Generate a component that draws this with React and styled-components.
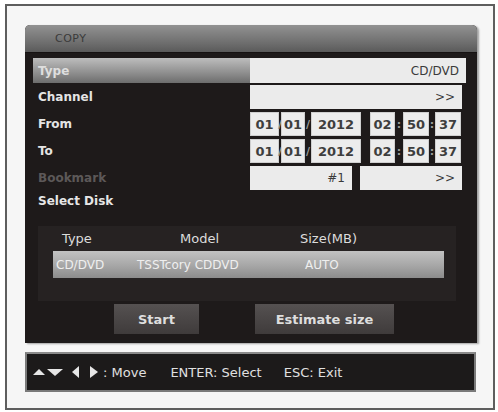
import React from 'react'
import styled, { createGlobalStyle } from 'styled-components'

const GlobalStyle = createGlobalStyle`
    html, body {
        margin:0;
        padding:0;
        background:#ffffff;
    }
    body{
        font-family:"DejaVu Sans", "Noto Sans", sans-serif;
    }
`

const dateFields = [
    { value: '01', width: 29, sep: '/', gap: 2 },
    { value: '01', width: 24, sep: '/', gap: 6 },
    { value: '2012', width: 50, sep: '', gap: 9 },
    { value: '02', width: 25, sep: ':', gap: 8 },
    { value: '50', width: 26, sep: ':', gap: 6 },
    { value: '37', width: 26, sep: '', gap: 0 },
]

const DateRow = () => (
    <DateWrap>
        {dateFields.map((f, i) => (
            <React.Fragment key={i}>
                <DateBox $w={f.width}>{f.value}</DateBox>
                {f.gap > 0 && <Sep $w={f.gap}>{f.sep}</Sep>}
            </React.Fragment>
        ))}
    </DateWrap>
)

const Arrows = () => (
    <svg width="66" height="14" viewBox="0 0 66 14">
        <polygon points="0,10 6,4 12,10" fill="#e6e6e6" />
        <polygon points="14,4 30,4 22,11" fill="#e6e6e6" />
        <polygon points="46,1 46,13 39,7" fill="#e6e6e6" />
        <polygon points="57,1 57,13 65,7" fill="#e6e6e6" />
    </svg>
)

const App = () => {
    return (
        <>
            <GlobalStyle />
            <Frame>
                <Panel>
                    <Header>COPY</Header>
                    <Body>
                        <Row>
                            <Label $active>Type</Label>
                            <Value $wide>CD/DVD</Value>
                        </Row>
                        <Row>
                            <Label>Channel</Label>
                            <Value>&gt;&gt;</Value>
                        </Row>
                        <Row>
                            <Label>From</Label>
                            <DateRow />
                        </Row>
                        <Row>
                            <Label>To</Label>
                            <DateRow />
                        </Row>
                        <Row>
                            <Label $dim>Bookmark</Label>
                            <SplitValue>
                                <Value>#1</Value>
                                <Value>&gt;&gt;</Value>
                            </SplitValue>
                        </Row>
                        <SectionTitle>Select Disk</SectionTitle>
                        <DiskBox>
                            <DiskHead>
                                <span>Type</span>
                                <span>Model</span>
                                <span>Size(MB)</span>
                            </DiskHead>
                            <DiskRow>
                                <span>CD/DVD</span>
                                <span>TSSTcory CDDVD</span>
                                <span>AUTO</span>
                            </DiskRow>
                        </DiskBox>
                        <Buttons>
                            <Button $w={85}>Start</Button>
                            <Button $w={139}>Estimate size</Button>
                        </Buttons>
                    </Body>
                </Panel>
                <Footer>
                    <Arrows />
                    <Hint $ml={4}>: Move</Hint>
                    <Hint $ml={24}>ENTER: Select</Hint>
                    <Hint $ml={22}>ESC: Exit</Hint>
                </Footer>
            </Frame>
        </>
    )
}

const Frame = styled.div`
    box-sizing:border-box;
    margin:4px 0 0 5px;
    width:490px;
    height:406px;
    border:2px solid #5e5e5e;
    background:#f6f6f6;
    padding:19px 0 0 18px;
`

const Panel = styled.div`
    width:452px;
    height:318px;
    background:#1e1a1a;
    border-radius:5px 5px 0 0;
    box-shadow:2px 1px 2px rgba(0,0,0,0.35);
    display:flex;
    flex-direction:column;
    overflow:hidden;
`

const Header = styled.div`
    height:28px;
    flex-shrink:0;
    background:linear-gradient(#929292, #6c6c6c 70%, #5a5a5a);
    color:#3a3a3a;
    font-size:11px;
    letter-spacing:0.5px;
    line-height:28px;
    padding-left:30px;
    border-bottom:1px solid #161212;
    box-sizing:border-box;
`

const Body = styled.div`
    display:flex;
    flex-direction:column;
    padding:5px 0 0 8px;
`

const Row = styled.div`
    display:grid;
    grid-template-columns:217px 1fr;
    height:24px;
    margin-bottom:3px;
    padding-right:15px;
`

const Label = styled.div`
    display:flex;
    align-items:center;
    padding-left:5px;
    font-size:12px;
    font-weight:bold;
    color:${p => p.$dim ? '#5c5858' : p.$active ? '#dedede' : '#e4e4e4'};
    background:${p => p.$active ? 'linear-gradient(#bdbdbd, #8e8e8e 60%, #6d6d6d)' : 'transparent'};
    height:${p => p.$active ? '25px' : '24px'};
`

const Value = styled.div`
    display:flex;
    align-items:center;
    justify-content:flex-end;
    padding-right:7px;
    background:#ebebeb;
    color:#3a3a3a;
    font-size:12px;
    height:${p => p.$wide ? '25px' : '24px'};
    margin-right:${p => p.$wide ? '-4px' : '0'};
`

const SplitValue = styled.div`
    display:grid;
    grid-template-columns:102px 102px;
    gap:8px;
`

const DateWrap = styled.div`
    display:flex;
`

const DateBox = styled.div`
    width:${p => p.$w}px;
    height:24px;
    box-sizing:border-box;
    border:1px solid #cfcfcf;
    background:#ececec;
    color:#3e3e3e;
    font-size:13px;
    font-weight:bold;
    display:flex;
    align-items:center;
    justify-content:center;
`

const Sep = styled.div`
    width:${p => p.$w}px;
    color:#9a9a9a;
    font-size:11px;
    font-weight:bold;
    display:flex;
    align-items:center;
    justify-content:center;
    overflow:visible;
`

const SectionTitle = styled.div`
    color:#e6e6e6;
    font-size:12px;
    font-weight:bold;
    height:20px;
    line-height:20px;
    margin-top:-2px;
    padding-left:5px;
`

const DiskBox = styled.div`
    margin:15px 0 0 5px;
    width:418px;
    height:75px;
    background:#262222;
    box-sizing:border-box;
    padding:4px 0 0 15px;
`

const cols = `
    display:grid;
    grid-template-columns:84px 120px 1fr;
`

const DiskHead = styled.div`
    ${cols}
    height:17px;
    align-items:center;
    color:#dcdcdc;
    font-size:13px;
    span:first-child{ padding-left:9px; }
    span:nth-child(2){ padding-left:43px; }
    span:nth-child(3){ padding-left:43px; }
`

const DiskRow = styled.div`
    ${cols}
    margin-top:4px;
    width:391px;
    height:27px;
    align-items:center;
    background:linear-gradient(#c2c2c2, #a6a6a6 55%, #8c8c8c);
    color:#efefef;
    font-size:12px;
    white-space:nowrap;
    span:first-child{ padding-left:3px; }
    span:nth-child(2){ padding-left:0; }
    span:nth-child(3){ padding-left:48px; }
`

const Buttons = styled.div`
    display:flex;
    gap:56px;
    margin:3px 0 0 81px;
`

const Button = styled.div`
    width:${p => p.$w}px;
    height:30px;
    background:linear-gradient(#555151, #3f3b3b);
    color:#dedede;
    font-size:13px;
    font-weight:bold;
    display:flex;
    align-items:center;
    justify-content:center;
`

const Footer = styled.div`
    margin-top:9px;
    width:451px;
    height:40px;
    box-sizing:border-box;
    background:#1c1a1a;
    border:2px solid #7a7a7a;
    border-top-color:#8a8a8a;
    display:flex;
    align-items:center;
    padding-left:6px;
    color:#e0e0e0;
    font-size:13px;
`

const Hint = styled.span`
    margin-left:${p => p.$ml}px;
`

export default App
